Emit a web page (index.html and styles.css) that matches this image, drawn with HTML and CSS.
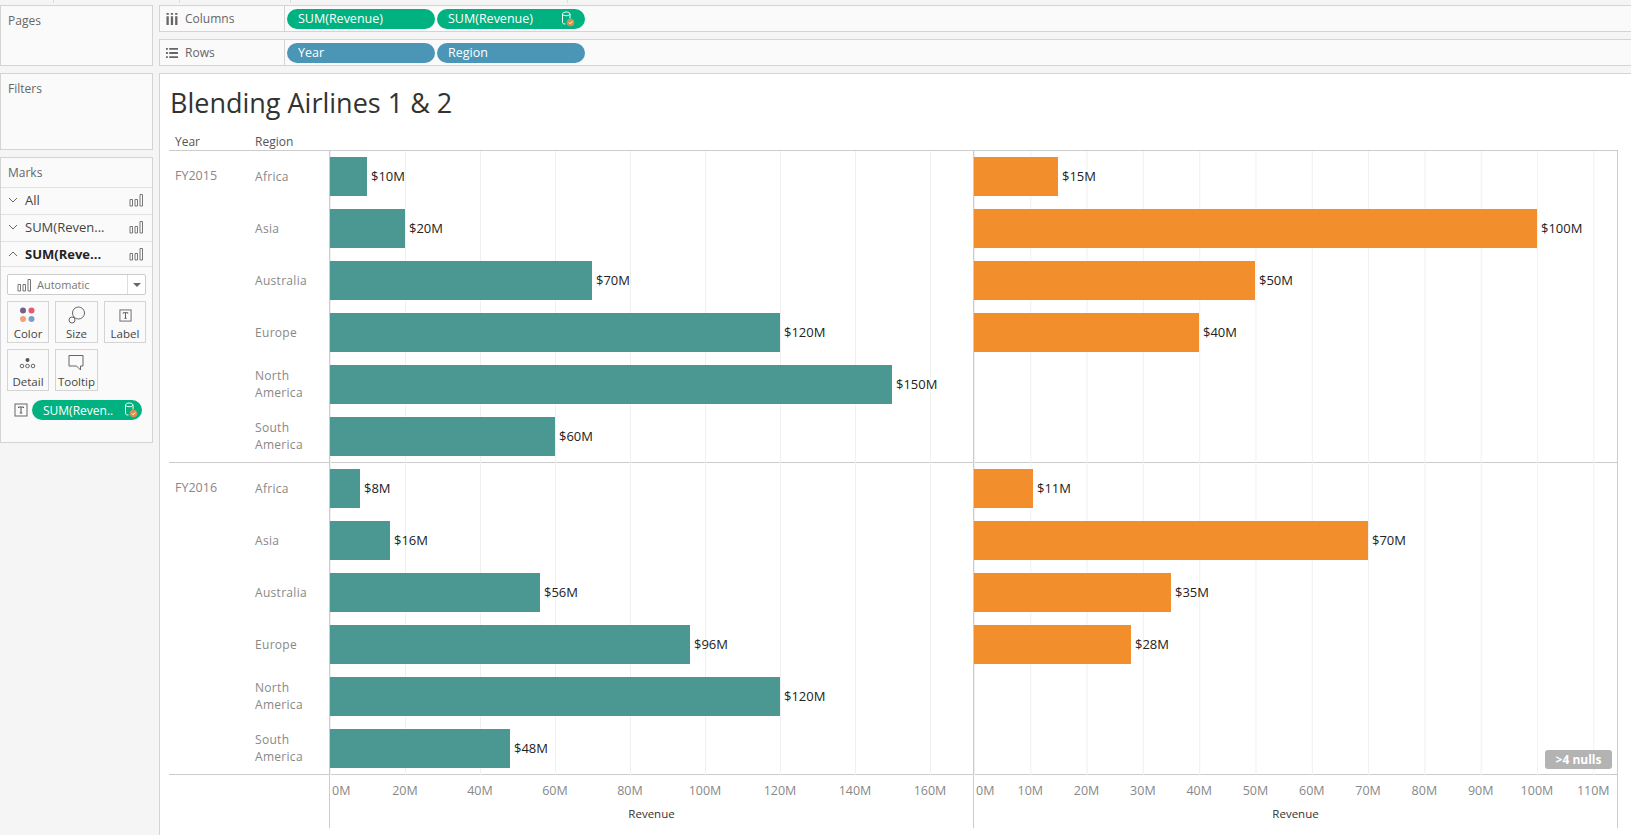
FILE: index.html
```html
<!DOCTYPE html>
<html lang="en">
<head>
  <meta charset="UTF-8">
  <title>Blending Airlines 1 &amp; 2</title>
  <link rel="stylesheet" href="styles.css">
</head>
<body>

  <svg class="defs" width="0" height="0">
    <symbol id="bars" viewBox="0 0 14 14">
      <path d="M1 6.500h2.500v6.500H1zM6 6.500h2.500v6.500H6zM11 1.500h2.500v11.500H11z" fill="none" stroke="#777" stroke-width="1"/>
    </symbol>
    <symbol id="source" viewBox="0 0 14 16">
      <path d="M1.500 3v8.500c0 1 1.200 1.500 3 1.500M1.500 3c0-1.100 1.700-2 3.700-2s3.800.9 3.800 2v4.500M1.500 3c0 1.100 1.700 1.700 3.700 1.700S9 4.100 9 3" fill="none" stroke="#fff" stroke-width="1"/>
      <circle cx="9.500" cy="11.500" r="3.800" fill="#d98f4e"/>
      <path d="M7.800 11.500l1.300 1.300 2.200-2.400" fill="none" stroke="#fff" stroke-width="1"/>
    </symbol>
    <symbol id="tbox" viewBox="0 0 14 14">
      <rect x="1" y="1" width="12" height="12" fill="none" stroke="#666"/>
      <path d="M4.500 5V4h5v1M7 4v6M5.800 10h2.400" fill="none" stroke="#555"/>
    </symbol>
    <symbol id="chev-down" viewBox="0 0 10 6">
      <path d="M1 1l4 4 4-4" fill="none" stroke="#666" stroke-width="1"/>
    </symbol>
  </svg>

  <div class="strip">
    <span class="strip-seg seg-a"></span>
    <span class="strip-seg seg-b"></span>
    <span class="strip-seg seg-c"></span>
    <span class="strip-seg seg-d"></span>
  </div>

  <div class="app">
    <aside class="sidebar">
      <section class="card pages-card"><h3>Pages</h3></section>
      <section class="card filters-card"><h3>Filters</h3></section>

      <section class="card marks-card">
        <h3>Marks</h3>
        <div class="layer">
          <svg class="chev"><use href="#chev-down"/></svg>
          <span class="layer-name">All</span>
          <svg class="bars"><use href="#bars"/></svg>
        </div>
        <div class="layer">
          <svg class="chev"><use href="#chev-down"/></svg>
          <span class="layer-name">SUM(Reven...</span>
          <svg class="bars"><use href="#bars"/></svg>
        </div>
        <div class="layer active">
          <svg class="chev flip"><use href="#chev-down"/></svg>
          <span class="layer-name">SUM(Reve...</span>
          <svg class="bars"><use href="#bars"/></svg>
        </div>

        <div class="mark-type">
          <svg class="bars type-bars"><use href="#bars"/></svg>
          <span class="type-name">Automatic</span>
          <span class="type-arrow"></span>
        </div>

        <div class="mark-buttons">
          <div class="mark-btn">
            <svg class="mark-icon" viewBox="0 0 18 18">
              <circle cx="4" cy="4.500" r="3" fill="#76608a"/>
              <circle cx="12.500" cy="4.500" r="3" fill="#e8596f"/>
              <circle cx="4" cy="13" r="3" fill="#f2a274"/>
              <circle cx="12.500" cy="13" r="3" fill="#7c9fc9"/>
            </svg>
            <span>Color</span>
          </div>
          <div class="mark-btn">
            <svg class="mark-icon" viewBox="0 0 18 18">
              <circle cx="10.500" cy="7" r="6" fill="none" stroke="#666"/>
              <circle cx="4" cy="14" r="3" fill="#fafafa" stroke="#666"/>
            </svg>
            <span>Size</span>
          </div>
          <div class="mark-btn">
            <svg class="mark-icon label-icon"><use href="#tbox"/></svg>
            <span>Label</span>
          </div>
          <div class="mark-btn">
            <svg class="mark-icon" viewBox="0 0 18 18">
              <circle cx="8.500" cy="6" r="2" fill="#555"/>
              <circle cx="3" cy="12" r="1.800" fill="none" stroke="#666"/>
              <circle cx="8.500" cy="12" r="1.800" fill="none" stroke="#666"/>
              <circle cx="14" cy="12" r="1.800" fill="none" stroke="#666"/>
            </svg>
            <span>Detail</span>
          </div>
          <div class="mark-btn">
            <svg class="mark-icon" viewBox="0 0 18 18">
              <path d="M1 1.500h14v10.500h-2.500v4l-4-4H1z" fill="none" stroke="#666"/>
            </svg>
            <span>Tooltip</span>
          </div>
        </div>

        <div class="mark-field">
          <svg class="field-t"><use href="#tbox"/></svg>
          <div class="pill green field-pill">
            <span>SUM(Reven..</span>
            <svg class="source"><use href="#source"/></svg>
          </div>
        </div>
      </section>
    </aside>

    <main class="main">
      <div class="shelf">
        <div class="shelf-label">
          <svg class="shelf-icon" viewBox="0 0 12 13">
            <path d="M0 0h2.500v2H0zM4.700 0h2.500v2H4.700zM9.400 0h2.500v2H9.400zM0 3.500h2.500V13H0zM4.700 3.500h2.500V13H4.700zM9.400 3.500h2.500V13H9.400z" fill="#666"/>
          </svg>
          <span>Columns</span>
        </div>
        <div class="pill green"><span>SUM(Revenue)</span></div>
        <div class="pill green">
          <span>SUM(Revenue)</span>
          <svg class="source"><use href="#source"/></svg>
        </div>
      </div>

      <div class="shelf">
        <div class="shelf-label">
          <svg class="shelf-icon" viewBox="0 0 13 11">
            <path d="M0 0h2v2H0zM3.500 0H13v2H3.500zM0 4.500h2v2H0zM3.500 4.500H13v2H3.500zM0 9h2v2H0zM3.500 9H13v2H3.500z" fill="#666"/>
          </svg>
          <span>Rows</span>
        </div>
        <div class="pill blue"><span>Year</span></div>
        <div class="pill blue"><span>Region</span></div>
      </div>

      <div class="viz">
        <h1 class="viz-title">Blending Airlines 1 &amp; 2</h1>
        <div class="col-heads">
          <span class="head-year">Year</span>
          <span>Region</span>
        </div>
        <div id="chart"></div>

        <div class="axis-row">
          <div class="axis-pane left-pane">
            <div class="ticks" id="leftTicks"></div>
            <div class="axis-title">Revenue</div>
          </div>
          <div class="axis-pane right-pane">
            <div class="ticks" id="rightTicks"></div>
            <div class="axis-title">Revenue</div>
          </div>
        </div>

        <div class="nulls">&gt;4 nulls</div>
      </div>
    </main>
  </div>

  <script>
    const LEFT_PX = 3.75;   // px per $1M, left pane
    const RIGHT_PX = 5.63;  // px per $1M, right pane

    const years = [
      {
        name: 'FY2015',
        rows: [
          ['Africa', 10, 15],
          ['Asia', 20, 100],
          ['Australia', 70, 50],
          ['Europe', 120, 40],
          ['North America', 150, null],
          ['South America', 60, null]
        ]
      },
      {
        name: 'FY2016',
        rows: [
          ['Africa', 8, 10.5],
          ['Asia', 16, 70],
          ['Australia', 56, 35],
          ['Europe', 96, 28],
          ['North America', 120, null],
          ['South America', 48, null]
        ]
      }
    ];

    function cell(value, scale, cls, color) {
      if (value === null) return `<div class="pane ${cls}"></div>`;
      return `
        <div class="pane ${cls}">
          <div class="bar ${color}" style="width:${Math.floor(value * scale)}px"></div>
          <span class="value">$${Math.round(value)}M</span>
        </div>`;
    }

    const chart = document.getElementById('chart');
    years.forEach(year => {
      const block = document.createElement('div');
      block.className = 'year-block';
      block.innerHTML = `<div class="year-name">${year.name}</div><div class="year-rows"></div>`;
      const rows = block.querySelector('.year-rows');
      year.rows.forEach(r => {
        rows.innerHTML += `
          <div class="row">
            <div class="region">${r[0]}</div>
            ${cell(r[1], LEFT_PX, 'left-pane', 'teal')}
            ${cell(r[2], RIGHT_PX, 'right-pane', 'orange')}
          </div>`;
      });
      chart.appendChild(block);
    });

    function addTicks(id, step, count) {
      const box = document.getElementById(id);
      for (let i = 0; i < count; i++) {
        box.innerHTML += `<span class="tick">${i * step}M</span>`;
      }
    }
    addTicks('leftTicks', 20, 9);
    addTicks('rightTicks', 10, 12);
  </script>

</body>
</html>
```

FILE: styles.css
```css
* {
  box-sizing: border-box;
}

html, body {
  margin: 0;
  height: 835px;
  overflow: hidden;
}

body {
  font-family: "Open Sans", "Noto Sans", sans-serif;
  font-size: 12px;
  color: #555;
  background-color: #f5f5f5;
}

.defs {
  display: block;
  height: 0;
}

.strip {
  display: flex;
  height: 5px;
}

.strip-seg {
  height: 3px;
  border-right: 1px solid #ddd;
}

.seg-a {
  width: 54px;
}

.seg-b {
  width: 126px;
}

.seg-c {
  width: 111px;
}

.seg-d {
  width: 277px;
}

.app {
  display: flex;
  gap: 6px;
  height: 840px;
}

/* left column */
.sidebar {
  width: 153px;
  flex: none;
  display: flex;
  flex-direction: column;
  gap: 7px;
}

.card {
  background: #fafafa;
  border: 1px solid #d4d4d4;
}

.card h3 {
  margin: 0;
  font-size: 12px;
  font-weight: 400;
  color: #666;
  padding: 6px 0 0 7px;
}

.pages-card {
  height: 61px;
}

.filters-card {
  height: 77px;
}

.marks-card {
  height: 286px;
}

.marks-card h3 {
  height: 30px;
  border-bottom: 1px solid #e2e2e2;
}

.layer {
  display: flex;
  align-items: center;
  height: 27px;
  padding: 0 9px 2px 7px;
  border-bottom: 1px solid #e2e2e2;
  color: #444;
  font-size: 13px;
}

.layer.active {
  height: 25px;
  padding-bottom: 0;
  font-weight: 700;
  color: #222;
}

.chev {
  width: 10px;
  height: 6px;
  margin-right: 7px;
  flex: none;
}

.flip {
  transform: rotate(180deg);
}

.layer-name {
  flex: 1;
  white-space: nowrap;
}

.bars {
  width: 14px;
  height: 14px;
  flex: none;
}

.mark-type {
  display: flex;
  align-items: center;
  height: 21px;
  margin: 7px 6px 0;
  background: #fff;
  border: 1px solid #ccc;
  border-radius: 2px;
  padding-left: 9px;
  color: #777;
  font-size: 11px;
}

.type-bars {
  margin-right: 6px;
}

.type-name {
  flex: 1;
}

.type-arrow {
  width: 18px;
  height: 100%;
  border-left: 1px solid #ddd;
  position: relative;
}

.type-arrow::after {
  content: "";
  position: absolute;
  left: 5px;
  top: 8px;
  border: 4px solid transparent;
  border-top: 4px solid #666;
}

.mark-buttons {
  display: grid;
  grid-template-columns: 42px 43px 42px;
  grid-auto-rows: 42px;
  column-gap: 6px;
  row-gap: 6px;
  margin: 6px 6px 0;
}

.mark-btn {
  display: flex;
  flex-direction: column;
  align-items: center;
  border: 1px solid #d4d4d4;
  padding-top: 4px;
  font-size: 11.500px;
  line-height: 15px;
  color: #444;
}

.mark-icon {
  width: 18px;
  height: 18px;
  margin-bottom: 2px;
}

.label-icon {
  width: 13px;
  height: 13px;
  margin: 3px 0 4px;
}

.mark-field {
  display: flex;
  align-items: center;
  margin: 9px 0 0 13px;
  gap: 4px;
}

.field-t {
  width: 14px;
  height: 14px;
  flex: none;
}

/* shelves */
.main {
  flex: 1;
  display: flex;
  flex-direction: column;
  gap: 7px;
  min-width: 0;
}

.shelf {
  display: flex;
  align-items: center;
  height: 27px;
  background: #fafafa;
  border: 1px solid #d4d4d4;
  border-right: none;
}

.shelf-label {
  display: flex;
  align-items: center;
  width: 125px;
  height: 100%;
  border-right: 1px solid #d4d4d4;
  padding-left: 6px;
  margin-right: 2px;
  color: #666;
}

.shelf-icon {
  width: 12px;
  height: 12px;
  margin-right: 7px;
}

.pill {
  display: flex;
  align-items: center;
  justify-content: space-between;
  width: 148px;
  height: 20px;
  margin-right: 2px;
  padding: 0 10px 0 11px;
  border-radius: 10px;
  color: #fff;
  font-size: 12.500px;
}

.green {
  background: #00b27f;
}

.blue {
  background: #4b96b6;
}

.source {
  width: 14px;
  height: 16px;
  flex: none;
}

.field-pill {
  width: 110px;
  padding: 0 4px 0 11px;
  margin: 0;
  font-size: 12px;
}

/* chart */
.viz {
  position: relative;
  flex: 1;
  background: #fff;
  border: 1px solid #d4d4d4;
  border-right: none;
  padding-left: 9px;
}

.viz-title {
  margin: 0;
  height: 52px;
  padding: 10px 0 0 1px;
  font-size: 27px;
  font-weight: 400;
  line-height: 37px;
  color: #333;
}

.col-heads {
  display: flex;
  height: 24px;
  align-items: center;
  padding: 6px 0 0 6px;
  color: #555;
  font-size: 12px;
}

.head-year {
  width: 80px;
}

.year-block {
  display: flex;
  width: 1449px;
  height: 312px;
  border-top: 1px solid #ccc;
}

.year-name {
  width: 86px;
  padding: 16px 0 0 6px;
  font-size: 12.500px;
  color: #888;
  flex: none;
}

.row {
  display: flex;
  height: 52px;
}

.region {
  width: 74px;
  align-self: center;
  margin-bottom: 2px;
  line-height: 17px;
  font-size: 12px;
  letter-spacing: .3px;
  color: #888;
}

.pane {
  display: flex;
  align-items: center;
  padding-bottom: 1px;
  border-left: 1px solid #ccc;
  background-repeat: repeat-x;
}

.left-pane {
  width: 644px;
}

.right-pane {
  width: 645px;
  border-right: 1px solid #ccc;
}

.pane.left-pane {
  background-image: linear-gradient(to right, #f0f0f0 1px, transparent 1px);
  background-size: 75px 100%;
}

.pane.right-pane {
  background-image: linear-gradient(to right, #f0f0f0 1px, transparent 1px);
  background-size: 56.300px 100%;
}

.bar {
  height: 39px;
}

.teal {
  background: #4a9891;
}

.orange {
  background: #f28e2b;
}

.value {
  margin: 0 0 2px 4px;
  font-size: 13px;
  font-weight: 500;
  color: #222;
}

.axis-row {
  display: flex;
  width: 1449px;
  padding-left: 160px;
  height: 54px;
  border-top: 1px solid #ccc;
}

.axis-pane {
  border-left: 1px solid #ccc;
}

.ticks {
  display: flex;
  height: 30px;
  align-items: center;
}

.tick {
  flex: none;
  text-align: center;
  font-size: 12.500px;
  color: #888;
}

.tick:first-child {
  text-align: left;
  padding-left: 2px;
}

.left-pane .tick {
  width: 75px;
}

.left-pane .tick:first-child {
  width: 37.500px;
}

.right-pane .tick {
  width: 56.300px;
}

.right-pane .tick:first-child {
  width: 28.150px;
}

.axis-title {
  text-align: center;
  font-size: 11.500px;
  color: #333;
  padding-top: 1px;
}

.nulls {
  position: absolute;
  left: 1385px;
  top: 676px;
  width: 67px;
  height: 19px;
  line-height: 19px;
  text-align: center;
  border-radius: 3px;
  background: #b3b3b3;
  color: #fff;
  font-size: 12px;
  font-weight: 700;
}
```
